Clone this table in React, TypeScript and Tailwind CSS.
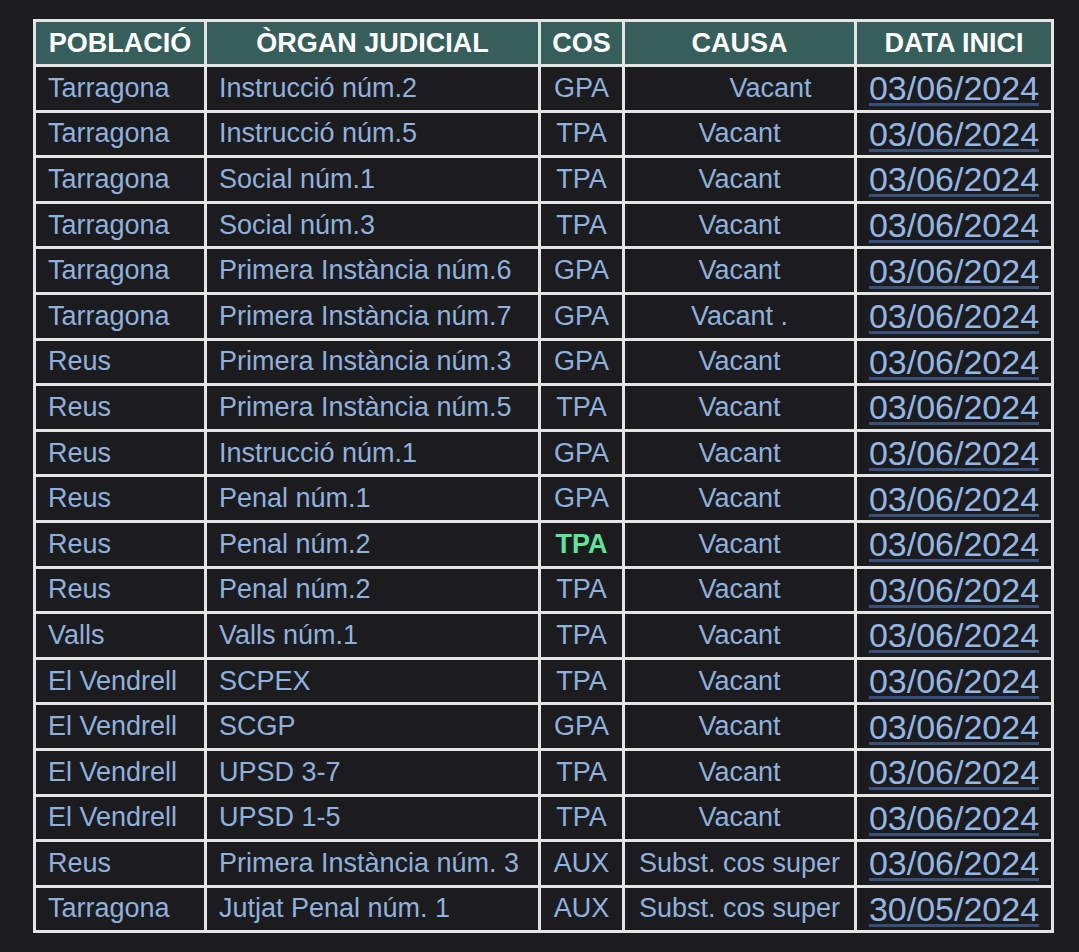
import React from 'react'

type Row = {
  poblacio: string
  organ: string
  cos: string
  causa: string
  data: string
  highlight?: boolean
  shifted?: boolean
}

const rows: Row[] = [
  { poblacio: 'Tarragona', organ: 'Instrucció núm.2', cos: 'GPA', causa: 'Vacant', data: '03/06/2024', shifted: true },
  { poblacio: 'Tarragona', organ: 'Instrucció núm.5', cos: 'TPA', causa: 'Vacant', data: '03/06/2024' },
  { poblacio: 'Tarragona', organ: 'Social núm.1', cos: 'TPA', causa: 'Vacant', data: '03/06/2024' },
  { poblacio: 'Tarragona', organ: 'Social núm.3', cos: 'TPA', causa: 'Vacant', data: '03/06/2024' },
  { poblacio: 'Tarragona', organ: 'Primera Instància núm.6', cos: 'GPA', causa: 'Vacant', data: '03/06/2024' },
  { poblacio: 'Tarragona', organ: 'Primera Instància núm.7', cos: 'GPA', causa: 'Vacant .', data: '03/06/2024' },
  { poblacio: 'Reus', organ: 'Primera Instància núm.3', cos: 'GPA', causa: 'Vacant', data: '03/06/2024' },
  { poblacio: 'Reus', organ: 'Primera Instància núm.5', cos: 'TPA', causa: 'Vacant', data: '03/06/2024' },
  { poblacio: 'Reus', organ: 'Instrucció núm.1', cos: 'GPA', causa: 'Vacant', data: '03/06/2024' },
  { poblacio: 'Reus', organ: 'Penal núm.1', cos: 'GPA', causa: 'Vacant', data: '03/06/2024' },
  { poblacio: 'Reus', organ: 'Penal núm.2', cos: 'TPA', causa: 'Vacant', data: '03/06/2024', highlight: true },
  { poblacio: 'Reus', organ: 'Penal núm.2', cos: 'TPA', causa: 'Vacant', data: '03/06/2024' },
  { poblacio: 'Valls', organ: 'Valls núm.1', cos: 'TPA', causa: 'Vacant', data: '03/06/2024' },
  { poblacio: 'El Vendrell', organ: 'SCPEX', cos: 'TPA', causa: 'Vacant', data: '03/06/2024' },
  { poblacio: 'El Vendrell', organ: 'SCGP', cos: 'GPA', causa: 'Vacant', data: '03/06/2024' },
  { poblacio: 'El Vendrell', organ: 'UPSD 3-7', cos: 'TPA', causa: 'Vacant', data: '03/06/2024' },
  { poblacio: 'El Vendrell', organ: 'UPSD 1-5', cos: 'TPA', causa: 'Vacant', data: '03/06/2024' },
  { poblacio: 'Reus', organ: 'Primera Instància núm. 3', cos: 'AUX', causa: 'Subst. cos super', data: '03/06/2024' },
  { poblacio: 'Tarragona', organ: 'Jutjat Penal núm. 1', cos: 'AUX', causa: 'Subst. cos super', data: '30/05/2024' },
]

const th = 'border-[3px] border-[#e4e4e4] bg-[#365f5c] text-white font-bold text-[27px] text-center leading-none'
const td = 'border-[3px] border-[#e4e4e4] text-[#8fb1de] text-[27px] leading-none whitespace-nowrap'

export default function App() {
  return (
    <div className="min-h-screen bg-[#1c1c1e] pt-[19px] pl-[33px] font-['Liberation_Sans',Arial,sans-serif]">
      <table className="w-[1018px] table-fixed border-collapse bg-[#1c1c1e]">
        <colgroup>
          <col className="w-[171px]" />
          <col className="w-[334px]" />
          <col className="w-[84px]" />
          <col className="w-[232px]" />
          <col className="w-[197px]" />
        </colgroup>
        <thead>
          <tr className="h-[45px]">
            <th className={th}>POBLACIÓ</th>
            <th className={th}>ÒRGAN JUDICIAL</th>
            <th className={th}>COS</th>
            <th className={th}>CAUSA</th>
            <th className={th}>DATA INICI</th>
          </tr>
        </thead>
        <tbody>
          {rows.map((r, i) => (
            <tr key={i} className="h-[45.6px]">
              <td className={`${td} pl-[12px]`}>{r.poblacio}</td>
              <td className={`${td} pl-[12px]`}>{r.organ}</td>
              <td
                className={
                  r.highlight
                    ? `${td} text-center font-bold !text-[#5fe39b]`
                    : `${td} text-center`
                }
              >
                {r.cos}
              </td>
              <td className={r.shifted ? `${td} text-center pl-[62px]` : `${td} text-center`}>
                {r.causa}
              </td>
              <td className={`${td} text-center`}>
                <span className="text-[34px] text-[#93b6e4] underline decoration-[#36507a] decoration-[3px] underline-offset-[3px]">
                  {r.data}
                </span>
              </td>
            </tr>
          ))}
        </tbody>
      </table>
    </div>
  )
}
